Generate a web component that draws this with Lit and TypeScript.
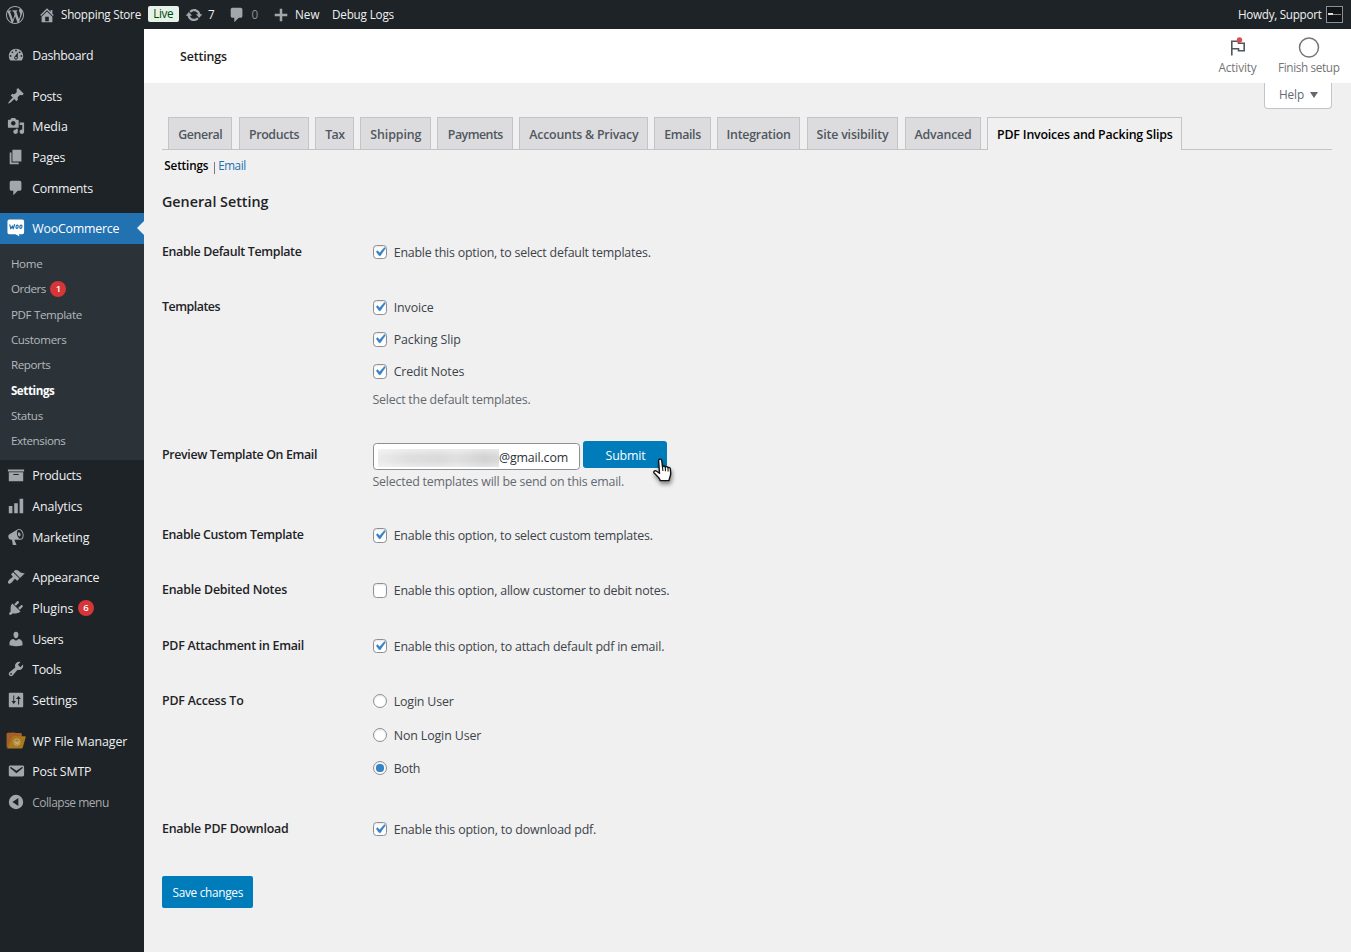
import { LitElement, html, css, svg, nothing } from "lit";
import { customElement, property } from "lit/decorators.js";
import { classMap } from "lit/directives/class-map.js";
import { styleMap } from "lit/directives/style-map.js";

const ICONS: Record<string, string> = {
  wordpress: "M20 10c0-5.51-4.49-10-10-10C4.48 0 0 4.49 0 10c0 5.52 4.48 10 10 10 5.51 0 10-4.48 10-10zM7.78 15.37L4.37 6.22c.55-.02 1.17-.08 1.17-.08.5-.06.44-1.13-.06-1.11 0 0-1.45.11-2.37.11-.18 0-.37 0-.58-.01C4.12 2.69 6.87 1.11 10 1.11c2.33 0 4.45.87 6.05 2.34-.68-.11-1.65.39-1.65 1.58 0 .74.45 1.36.9 2.1.35.61.55 1.36.55 2.46 0 1.49-1.4 5-1.4 5l-3.03-8.37c.54-.02.82-.17.82-.17.5-.05.44-1.25-.06-1.22 0 0-1.44.12-2.38.12-.87 0-2.33-.12-2.33-.12-.5-.03-.56 1.2-.06 1.22l.92.08 1.26 3.41zM17.41 10c.24-.64.74-1.87.43-4.25.7 1.29 1.05 2.71 1.05 4.25 0 3.29-1.73 6.24-4.4 7.78.97-2.59 1.94-5.2 2.92-7.78zM6.1 18.09C3.12 16.65 1.11 13.53 1.11 10c0-1.3.23-2.48.72-3.59C3.25 10.3 4.67 14.2 6.1 18.09zm4.03-6.63l2.58 6.98c-.86.29-1.76.45-2.71.45-.79 0-1.57-.11-2.29-.33.81-2.38 1.62-4.74 2.42-7.1z",
  home: "M16 8.5l1.53 1.53-1.06 1.06L10 4.6l-6.47 6.49-1.06-1.06L10 2.5l4 4v-2h2v4zm-6-2.46l6 5.99V18H4v-5.97zM12 17v-5H8v5h4z",
  update: "M10.2 3.28c3.53 0 6.43 2.61 6.92 6h2.08l-3.5 4-3.5-4h2.32c-.45-1.97-2.21-3.45-4.32-3.45-1.45 0-2.73.71-3.54 1.78L4.95 5.66C6.23 4.2 8.11 3.28 10.2 3.28zm-.4 13.44c-3.52 0-6.43-2.61-6.92-6H.8l3.5-4c1.17 1.33 2.33 2.67 3.5 4H5.48c.45 1.97 2.21 3.45 4.32 3.45 1.45 0 2.73-.71 3.54-1.78l1.71 1.95c-1.28 1.46-3.15 2.38-5.25 2.38z",
  plus: "M17 8.6v2.8h-5.6V17H8.6v-5.6H3V8.600h5.600V3h2.800v5.600z",
  dashboard: "M3.76 16h12.48c1.1-1.37 1.76-3.11 1.76-5 0-4.42-3.58-8-8-8s-8 3.58-8 8c0 1.89.66 3.63 1.76 5zM10 4c.55 0 1 .45 1 1s-.45 1-1 1-1-.45-1-1 .45-1 1-1zM6 6c.55 0 1 .45 1 1s-.45 1-1 1-1-.45-1-1 .45-1 1-1zm8 0c.55 0 1 .45 1 1s-.45 1-1 1-1-.45-1-1 .45-1 1-1zm-5.370 5.550L12 7v6c0 1.100-.9 2-2 2s-2-.9-2-2c0-.57.24-1.080.63-1.450zM4 10c.55 0 1 .45 1 1s-.45 1-1 1-1-.45-1-1 .45-1 1-1zm12 0c.55 0 1 .45 1 1s-.45 1-1 1-1-.45-1-1 .45-1 1-1zm-5 3c0-.55-.45-1-1-1s-1 .45-1 1 .45 1 1 1 1-.45 1-1z",
  post: "M10.44 3.02l1.82-1.82 6.36 6.35-1.83 1.82c-1.05-.68-2.48-.57-3.41.36l-.75.75c-.92.93-1.04 2.35-.35 3.41l-1.83 1.82-2.41-2.41-2.8 2.79c-.42.42-3.38 2.71-3.8 2.29s1.86-3.39 2.28-3.81l2.79-2.79L4.1 9.36l1.83-1.82c1.05.69 2.48.57 3.4-.36l.75-.75c.93-.92 1.05-2.35.36-3.41z",
  media: "M13 11V4c0-.55-.45-1-1-1h-1.67L9 1H5L3.67 3H2c-.55 0-1 .45-1 1v7c0 .55.45 1 1 1h10c.55 0 1-.45 1-1zM7 4.5c1.38 0 2.5 1.12 2.5 2.5S8.38 9.5 7 9.5 4.5 8.38 4.5 7 5.62 4.5 7 4.5zM14 6h5v10.5c0 1.38-1.12 2.5-2.5 2.5S14 17.88 14 16.5s1.12-2.5 2.5-2.5c.17 0 .34.02.5.05V9h-3V6zm-4 8.05V13h2v3.5c0 1.38-1.12 2.5-2.5 2.5S7 17.88 7 16.5 8.12 14 9.5 14c.17 0 .34.02.5.05z",
  page: "M6 15V2h10v13H6zm-1 1h8v2H3V5h2v11z",
  comment: "M5 2h9c1.1 0 2 .9 2 2v7c0 1.1-.9 2-2 2h-2l-5 5v-5H5c-1.1 0-2-.9-2-2V4c0-1.1.9-2 2-2z",
  archive: "M19 4v2H1V4h18zM2 7h16v10H2V7zm11 3V9H7v1h6z",
  chart: "M18 18V2h-4v16h4zm-6 0V7H8v11h4zm-6 0v-8H2v8h4z",
  megaphone: "M18.15 5.94c.46 1.62.38 3.22-.02 4.48-.42 1.28-1.26 2.18-2.3 2.48-.16.06-.26.06-.4.06-.06.02-.12.02-.18.02-.06.02-.14.02-.22.02h-6.8l2.22 5.5c.02.14-.06.26-.14.34-.08.1-.24.16-.34.16H6.95c-.1 0-.26-.06-.34-.16-.08-.08-.16-.2-.14-.34l-1-5.5H4.25l-.02-.02c-.5.06-1.08-.18-1.54-.62s-.88-1.08-1.06-1.88c-.24-.8-.2-1.56-.02-2.2.18-.62.58-1.08 1.06-1.3l.02-.02 9-5.4c.1-.06.18-.1.24-.16.06-.04.14-.08.24-.12.16-.08.28-.12.5-.18 1.04-.3 2.24.1 3.22.98s1.84 2.24 2.26 3.86zm-2.58 5.98h-.02c.4-.1.74-.34 1.04-.7.58-.7.86-1.76.86-3.04 0-.64-.1-1.3-.28-1.98-.34-1.36-1.02-2.5-1.78-3.24s-1.68-1.1-2.46-.88c-.82.22-1.4.96-1.7 2-.32 1.04-.28 2.36.06 3.72.38 1.36 1 2.5 1.8 3.24.78.74 1.62 1.1 2.48.88zm-2.54-7.08c.22-.04.42-.02.62.04.38.16.76.48 1.02 1s.42 1.2.42 1.78c0 .3-.04.56-.12.8-.18.48-.44.84-.86.94-.34.1-.8-.06-1.14-.4s-.64-.86-.78-1.5c-.18-.62-.12-1.24.02-1.72s.48-.84.82-.94z",
  appearance: "M14.48 11.06L7.41 3.99l1.5-1.5c.5-.56 2.3-.47 3.51.32 1.21.8 1.43 1.28 2.91 2.1 1.18.64 2.45 1.26 4.45.85zm-.71.71L6.7 4.7 4.93 6.47c-.39.39-.39 1.02 0 1.41l1.06 1.06c.39.39.39 1.03 0 1.42-.6.6-1.43 1.11-2.21 1.69-.35.26-.7.53-1.01.84C1.43 14.23.4 16.08 1.4 17.07c.99 1 2.84-.03 4.18-1.36.31-.31.58-.66.85-1.02.57-.78 1.08-1.61 1.69-2.21.39-.39 1.02-.39 1.41 0l1.06 1.06c.39.39 1.02.39 1.41 0z",
  plugins: "M13.11 4.36L9.87 7.6 8 5.73l3.24-3.24c.35-.34 1.05-.2 1.56.32.52.51.66 1.21.31 1.55zm-8 1.77l.91-1.12 9.01 9.01-1.19.84c-.71.71-2.63 1.16-3.82 1.16H6.14L4.9 17.26c-.59.59-1.54.59-2.12 0-.59-.58-.59-1.53 0-2.12l1.24-1.24v-3.88c0-1.13.4-3.19 1.09-3.89zm7.26 3.97l3.24-3.24c.34-.35 1.04-.21 1.55.31.52.51.66 1.21.31 1.55l-3.24 3.25z",
  users: "M10 9.25c-2.27 0-2.73-3.44-2.73-3.44C7 4.02 7.82 2 9.97 2c2.16 0 2.98 2.02 2.71 3.81 0 0-.41 3.44-2.68 3.44zm0 2.57L12.72 10c2.39 0 4.52 2.33 4.52 4.53v2.49s-3.65 1.13-7.24 1.13c-3.65 0-7.24-1.13-7.24-1.13v-2.49c0-2.25 1.94-4.48 4.47-4.48z",
  tools: "M16.68 9.77c-1.34 1.34-3.3 1.67-4.95.99l-5.41 6.52c-.99.99-2.59.99-3.58 0s-.99-2.59 0-3.57l6.52-5.42c-.68-1.65-.35-3.61.99-4.95 1.28-1.28 3.12-1.62 4.72-1.06l-2.89 2.89 2.82 2.82 2.86-2.87c.53 1.58.18 3.39-1.08 4.65zM3.81 16.21c.4.39 1.04.39 1.43 0 .4-.4.4-1.04 0-1.43-.39-.4-1.03-.4-1.43 0-.39.39-.39 1.03 0 1.43z",
  settings: "M18 16V4c0-1.1 0-2-1-2H3c-1 0-1 .9-1 2v12c0 1.1 0 2 1 2h14c1 0 1-.9 1-2zM8 11h2l-2.500 3.500L5 11h2V5h1zM12 9h-2l2.800-3.500L15.500 9h-2v6h-1.200V9z",
  email: "M3.87 4h13.250C18.370 4 19 4.590 19 5.790v8.420c0 1.190-.63 1.790-1.880 1.790H3.870c-1.250 0-1.880-.6-1.880-1.790V5.790c0-1.200.63-1.790 1.880-1.790zm6.620 8.600l6.740-5.530c.24-.2.43-.66.13-1.070-.29-.41-.82-.42-1.170-.17l-5.700 3.860L4.800 5.830c-.35-.25-.88-.24-1.170.17-.3.41-.11.87.13 1.070z",
  collapse: "M10 2a8 8 0 1 0 0 16a8 8 0 0 0 0-16zM12.600 5.600v8.800L6 10z",
};

/** Single-line text whose tracking is tuned so that it occupies a given advance width. */
@customElement("fit-text")
export class FitText extends LitElement {
  @property({ type: Number }) w = 0;
  @property() text = "";
  static styles = css`
    :host { display: inline-block; white-space: nowrap; }
    .t { display: inline-block; }
  `;
  render() {
    return html`<span class="t">${this.text}</span>`;
  }
  updated() {
    const t = this.renderRoot.querySelector(".t") as HTMLElement;
    t.style.letterSpacing = "0";
    const natural = t.getBoundingClientRect().width;
    if (this.w) t.style.letterSpacing = `${(this.w - natural) / this.text.length}px`;
  }
}

@customElement("dash-icon")
export class DashIcon extends LitElement {
  @property() name = "";
  static styles = css`
    :host { display: flex; width: 18px; height: 18px; }
    svg { width: 100%; height: 100%; fill: currentColor; overflow: visible; }
  `;
  render() {
    if (this.name === "woo")
      return html`<svg viewBox="0 0 20 20">
        <path fill="#fff" d="M2.500 .5h14.500q2 0 2 2v12.500q0 2-2 2h-4l1 2.500L9.500 17H2.500q-2 0-2-2V2.500q0-2 2-2z" />
        <g fill="none" stroke="#2271b1" stroke-width="1.300" stroke-linejoin="round" stroke-linecap="round">
          <path d="M3.200 6.500l1 4.400 1.800-3.200.9 3.200 1.500-4.800" />
          <ellipse cx="11.200" cy="8.600" rx="1.200" ry="1.900" transform="rotate(12 11.200 8.600)" />
          <ellipse cx="15.400" cy="8.600" rx="1.200" ry="1.900" transform="rotate(12 15.400 8.600)" />
        </g>
      </svg>`;
    if (this.name === "files")
      return html`<svg viewBox="0 0 20 20">
        <path fill="#a5602a" d="M-.5 2.500q0-1.500 1.500-1.800L8 .5q1.200 0 1.700 .6H15q1.500 0 1.500 1.500V17H-.5z" />
        <path fill="#a87a1d" d="M6 5.500Q6.500 4.700 7.500 4.700h12.500q1.200 0 .8 1.200L17.500 17.300q-.3 1-1.500 1H-.5L1 17z" />
        <circle cx="11" cy="11.300" r="3.500" fill="none" stroke="#cdb283" stroke-width=".9" />
        <path d="M8.800 9.800l1.400 3.800 .9-3 .9 3 1.400-3.800" fill="none" stroke="#cdb283" stroke-width="1" />
      </svg>`;
    return html`<svg viewBox="0 0 20 20">${svg`<path fill-rule="evenodd" d=${ICONS[this.name] ?? ""}></path>`}</svg>`;
  }
}

type Item = { icon: string; label: string; w: number; gap?: boolean; badge?: string; current?: boolean };

const MENU_TOP: Item[] = [
  { icon: "dashboard", label: "Dashboard", w: 61 },
  { icon: "post", label: "Posts", w: 29.5, gap: true },
  { icon: "media", label: "Media", w: 35.5 },
  { icon: "page", label: "Pages", w: 33 },
  { icon: "comment", label: "Comments", w: 60.5 },
  { icon: "woo", label: "WooCommerce", w: 87, gap: true, current: true },
];
const SUBMENU = [
  { label: "Home", w: 31.5 },
  { label: "Orders", w: 35, badge: "1" },
  { label: "PDF Template", w: 71 },
  { label: "Customers", w: 55.5 },
  { label: "Reports", w: 39.5 },
  { label: "Settings", w: 43.5, active: true },
  { label: "Status", w: 32 },
  { label: "Extensions", w: 54.5 },
];
const MENU_BOTTOM: Item[] = [
  { icon: "archive", label: "Products", w: 49 },
  { icon: "chart", label: "Analytics", w: 50 },
  { icon: "megaphone", label: "Marketing", w: 57 },
  { icon: "appearance", label: "Appearance", w: 67, gap: true },
  { icon: "plugins", label: "Plugins", w: 41, badge: "6" },
  { icon: "users", label: "Users", w: 31 },
  { icon: "tools", label: "Tools", w: 29 },
  { icon: "settings", label: "Settings", w: 45 },
  { icon: "files", label: "WP File Manager", w: 95, gap: true },
  { icon: "email", label: "Post SMTP", w: 59 },
];

@customElement("admin-menu")
export class AdminMenu extends LitElement {
  static styles = css`
    :host { display: flex; flex-direction: column; box-sizing: border-box; width: 144px; padding-top: 10.800px; background: #1d2327; color: #f0f0f1; font-size: 12.400px; }
    .item { display: flex; align-items: center; height: 30.700px; color: #f0f0f1; flex: none; }
    .item.gap { margin-top: 9.900px; }
    .item fit-text { margin-top: 1.700px; }
    .slot { display: flex; justify-content: center; width: 32.300px; color: #a2a7ad; }
    .slot.files dash-icon { margin-left: -1px; }
    .current { position: relative; background: #2271b1; color: #fff; }
    .current::after { content: ""; position: absolute; right: 0; top: 8.200px; border: 7.200px solid transparent; border-left: 0; border-right-color: #f0f0f1; }
    .badge { display: flex; align-items: center; justify-content: center; width: 16px; height: 16px; margin-left: 4.600px; border-radius: 50%; background: #d63638; color: #fff; font-size: 9.500px; font-weight: 600; }
    .sub { display: flex; flex-direction: column; padding: 7.450px 0 6.050px 10.900px; background: #2c3338; font-size: 11.600px; color: #b4b9be; }
    .sub > div { display: flex; align-items: center; height: 25.360px; }
    .sub .active { color: #fff; font-weight: 700; }
    .collapse { color: #a7aaad; font-size: 12px; }
  `;
  row(i: Item) {
    return html`<div class=${classMap({ item: true, gap: !!i.gap, current: !!i.current })}>
      <span class="slot ${i.icon}"><dash-icon name=${i.icon}></dash-icon></span>
      <fit-text .w=${i.w} .text=${i.label}></fit-text>
      ${i.badge ? html`<span class="badge">${i.badge}</span>` : nothing}
    </div>`;
  }
  render() {
    return html`${MENU_TOP.map((i) => this.row(i))}
      <div class="sub">
        ${SUBMENU.map((s) => html`<div class=${classMap({ active: !!s.active })}>
          <fit-text .w=${s.w} .text=${s.label}></fit-text>${s.badge ? html`<span class="badge">${s.badge}</span>` : nothing}
        </div>`)}
      </div>
      ${MENU_BOTTOM.map((i) => this.row(i))}
      <div class="item collapse">
        <span class="slot"><dash-icon name="collapse"></dash-icon></span>
        <fit-text .w=${76.5} .text=${"Collapse menu"}></fit-text>
      </div>`;
  }
}

@customElement("check-option")
export class CheckOption extends LitElement {
  @property() kind = "checkbox";
  @property({ type: Boolean }) on = false;
  @property() text = "";
  @property({ type: Number }) w = 0;
  static styles = css`
    :host { display: flex; align-items: center; height: 20px; color: #3c434a; }
    .box { display: flex; align-items: center; justify-content: center; box-sizing: border-box; width: 14.400px; height: 14.400px; margin: 0 6.500px 1.700px -0.200px; border: 1px solid #8c8f94; border-radius: 3.600px; background: #fff; box-shadow: inset 0 1px 2px rgba(0, 0, 0, 0.1); }
    .radio { border-radius: 50%; }
    .dot { width: 7.200px; height: 7.200px; border-radius: 50%; background: #3582c4; }
    svg { width: 18px; height: 18px; margin: -3px; flex: none; }
  `;
  render() {
    const radio = this.kind === "radio";
    return html`<span class=${classMap({ box: true, radio })}>
        ${!this.on ? nothing : radio ? html`<span class="dot"></span>`
          : html`<svg viewBox="0 0 20 20"><path fill="#3582c4" stroke="#3582c4" stroke-width=".4" d="M14.830 4.890l1.340.94-5.810 8.380H9.020L5.780 9.670l1.340-1.250 2.570 2.400z" /></svg>`}
      </span><fit-text .w=${this.w} .text=${this.text}></fit-text>`;
  }
}

const TABS = [
  { label: "General", t: 44, w: 64, gap: 0 },
  { label: "Products", t: 50, w: 70.5, gap: 6.5 },
  { label: "Tax", t: 19, w: 39, gap: 6 },
  { label: "Shipping", t: 51, w: 71, gap: 6 },
  { label: "Payments", t: 55, w: 76, gap: 6 },
  { label: "Accounts & Privacy", t: 109, w: 129, gap: 6 },
  { label: "Emails", t: 36.5, w: 56.5, gap: 6 },
  { label: "Integration", t: 64, w: 83.5, gap: 6 },
  { label: "Site visibility", t: 72, w: 91.500, gap: 6.5 },
  { label: "Advanced", t: 57, w: 76.5, gap: 6.5 },
  { label: "PDF Invoices and Packing Slips", t: 175.5, w: 195, gap: 6, active: true },
];

@customElement("app-root")
export class AppRoot extends LitElement {
  static styles = css`
    :host { display: flex; flex-direction: column; width: 100%; height: 952px; overflow: hidden; background: #f0f0f0; color: #1d2327; font: 12.400px/18px "Open Sans", "Noto Sans", sans-serif; font-stretch: 95%; }
    .bar { display: flex; align-items: center; height: 29px; box-sizing: border-box; padding: 0 8px 0 6.200px; background: #1d2327; color: #f0f0f1; font-size: 11.700px; flex: none; }
    .bar dash-icon { color: #a2a7ad; }
    .bar fit-text { margin-bottom: 1.200px; }
    .home { margin: 0 5px 0 13.800px; }
    .live { display: flex; justify-content: center; width: 31px; height: 16px; margin: -1px 6px 0 6.700px; border-radius: 2px; background: #e6f2e8; color: #00450c; line-height: 15px; }
    .upd { margin-right: 5.300px; }
    .com { margin: 0 5.500px 0 13.500px; }
    .zero { color: #8c8f94; }
    .new { margin: 0 5px 0 14px; }
    .debug { margin-left: 12.500px; }
    .howdy { margin-left: auto; }
    .avatar { display: flex; align-items: center; box-sizing: border-box; width: 17px; height: 17px; margin: 0 0 1px 4.500px; padding: 0 1px; border: 1px solid #8c8f94; background: #111416; }
    .avatar::before { content: ""; width: 5px; height: 2px; background: #ddd; }
    .avatar::after { content: ""; flex: 1; height: 1px; background: #888; }
    .body { display: flex; flex: 1; min-height: 0; }
    .page { display: flex; flex-direction: column; flex: 1; min-width: 0; }
    .head { display: flex; align-items: center; height: 54px; box-sizing: border-box; padding: 0 11.500px 0 36px; background: #fff; font-weight: 600; color: #1e1e1e; flex: none; }
    .head > fit-text { margin-top: 1.500px; }
    .acts { display: flex; gap: 21.500px; margin-left: auto; }
    .act { display: flex; flex-direction: column; align-items: center; font-weight: 400; font-size: 11.800px; color: #757575; }
    .act svg { width: 24px; height: 22px; }
    .act fit-text { margin-bottom: 1px; }
    .main { display: flex; flex-direction: column; align-items: flex-start; padding: 0 19px 0 18px; }
    .help { display: flex; align-items: center; justify-content: center; gap: 5.500px; align-self: flex-end; box-sizing: border-box; width: 68px; height: 26px; padding: 0 0 3px 0.500px; border: 1px solid #c3c4c7; border-top: 0; border-radius: 0 0 4px 4px; background: #fff; color: #646970; font-size: 11.800px; }
    .help i { border: 4px solid transparent; border-top: 6px solid #646970; border-bottom: 0; margin-top: 1px; }
    .tabs { display: flex; align-self: stretch; box-sizing: border-box; height: 41px; padding: 8px 0 0 6px; border-bottom: 1px solid #c3c4c7; font-weight: 600; color: #50575e; }
    .tab { display: flex; align-items: center; justify-content: center; box-sizing: border-box; height: 32px; padding: 2px 0 0 0.600px; border: 1px solid #c3c4c7; border-bottom: 0; background: #dcdcde; flex: none; }
    .tab.active { height: 33px; background: #f0f0f0; color: #000; }
    .links { display: flex; height: 18px; margin: 6px 0 0 2.300px; font-size: 11.700px; color: #646970; }
    .links b { font-weight: 600; color: #000; margin-right: 5.400px; }
    .links i { width: 1px; height: 12px; margin: 6px 3.500px 0 0; background: #787c82; }
    .links a { color: #2271b1; }
    h2 { margin: 18px 0 0; font-size: 14.300px; line-height: 20px; font-weight: 600; }
    .form { display: grid; grid-template-columns: 211px auto; margin-top: 31px; }
    .form > div { display: flex; flex-direction: column; align-items: flex-start; }
    .th { font-weight: 600; }
    .r1 { height: 55.300px; }
    .r4, .r5, .r6 { height: 55.200px; }
    .r2 { height: 148px; }
    .r3 { height: 80px; }
    .r7 { height: 127.800px; }
    .r8 { height: 35px; }
    .r2 .opt + .opt { margin-top: 12px; }
    .r7 .opt + .opt { margin-top: 14px; }
    .r7 .opt:last-child { margin-top: 13px; }
    .desc { margin-left: -0.500px; color: #646970; }
    .r2 .desc { margin-top: 9px; }
    .mail { display: flex; align-items: flex-start; margin-top: -5px; }
    .input { display: flex; align-items: center; box-sizing: border-box; width: 207px; height: 27px; margin: 2px 3px 0 0; padding: 2px 0 0 4px; border: 1px solid #8c8f94; border-radius: 3.600px; background: #fff; color: #2c3338; }
    .smear { width: 121px; height: 18px; background: linear-gradient(180deg, rgba(255, 255, 255, 0.45), rgba(255, 255, 255, 0) 40%, rgba(255, 255, 255, 0) 65%, rgba(255, 255, 255, 0.35)), linear-gradient(90deg, #ebebeb, #dfdfdf 25%, #dadada 50%, #e0e0e0 65%, #d3d3d3 88%, #d9d9d9); }
    .submit { position: relative; display: flex; align-items: center; justify-content: center; box-sizing: border-box; width: 84px; height: 27px; padding: 1.500px 0 0 1px; border-radius: 3px; background: #007cba; color: #fff; }
    .hand { position: absolute; left: 68px; top: 16px; width: 24px; height: 30px; filter: drop-shadow(1px 3px 2px rgba(0, 0, 0, 0.45)); }
    .r3 .desc { margin-top: 3px; }
    .save { display: flex; align-items: center; justify-content: center; box-sizing: border-box; width: 91px; height: 32px; margin-top: 21px; padding: 1.500px 0 0 0.500px; border-radius: 2px; background: #007cba; color: #fff; font-size: 11.800px; }
  `;
  th(text: string, w: number, row: string) {
    return html`<div class="th ${row}"><fit-text .w=${w} .text=${text}></fit-text></div>`;
  }
  opt(text: string, w: number, on = true, kind = "checkbox") {
    return html`<check-option class="opt" .kind=${kind} .on=${on} .text=${text} .w=${w}></check-option>`;
  }
  t(text: string, w: number) {
    return html`<fit-text .w=${w} .text=${text}></fit-text>`;
  }
  render() {
    return html`
      <div class="bar">
        <dash-icon name="wordpress"></dash-icon>
        <dash-icon class="home" name="home"></dash-icon>${this.t("Shopping Store", 80)}
        <span class="live">${this.t("Live", 20)}</span>
        <dash-icon class="upd" name="update"></dash-icon>${this.t("7", 6.5)}
        <dash-icon class="com" name="comment"></dash-icon><span class="zero">${this.t("0", 6.5)}</span>
        <dash-icon class="new" name="plus"></dash-icon>${this.t("New", 24.5)}
        <span class="debug">${this.t("Debug Logs", 62)}</span>
        <span class="howdy">${this.t("Howdy, Support", 83.500)}</span>
        <span class="avatar"></span>
      </div>
      <div class="body">
        <admin-menu></admin-menu>
        <div class="page">
          <div class="head">
            ${this.t("Settings", 47)}
            <div class="acts">
              <div class="act">
                <svg viewBox="0 0 24 22" fill="none" stroke="#50575e" stroke-width="1.600">
                  <path d="M5.800 19.500V5.200h6.700v2h5.700v7.600h-5.700v-2H5.800" /><circle cx="13.500" cy="4" r="2.700" fill="#d94f4f" stroke="none" />
                </svg>
                ${this.t("Activity", 38)}
              </div>
              <div class="act">
                <svg viewBox="0 0 24 22" fill="none" stroke="#757575" stroke-width="1.500"><circle cx="12" cy="11.500" r="9.500" /></svg>
                ${this.t("Finish setup", 61.500)}
              </div>
            </div>
          </div>
          <div class="main">
            <div class="help">${this.t("Help", 25)}<i></i></div>
            <div class="tabs">
              ${TABS.map((tab) => html`<div class=${classMap({ tab: true, active: !!tab.active })}
                style=${styleMap({ width: `${tab.w}px`, marginLeft: `${tab.gap}px` })}>${this.t(tab.label, tab.t)}</div>`)}
            </div>
            <div class="links"><b>${this.t("Settings", 44)}</b><i></i><a>${this.t("Email", 27.500)}</a></div>
            <h2>${this.t("General Setting", 106.500)}</h2>
            <div class="form">
              ${this.th("Enable Default Template", 139.500, "r1")}
              <div class="r1">${this.opt("Enable this option, to select default templates.", 257)}</div>
              ${this.th("Templates", 58, "r2")}
              <div class="r2">
                ${this.opt("Invoice", 40)}${this.opt("Packing Slip", 67)}${this.opt("Credit Notes", 70.500)}
                <span class="desc">${this.t("Select the default templates.", 158)}</span>
              </div>
              ${this.th("Preview Template On Email", 155, "r3")}
              <div class="r3">
                <div class="mail">
                  <div class="input"><span class="smear"></span>${this.t("@gmail.com", 69)}</div>
                  <div class="submit">${this.t("Submit", 40)}
                    <svg class="hand" viewBox="0 0 24 30">
                      <path fill="#fff" stroke="#111" stroke-width="1.400" stroke-linejoin="round" d="M7.600 3.800c0-2.200 3-2.200 3.200 0l.7 6.200c.4-1.400 2.600-1.200 2.800.3.600-1.100 2.500-.8 2.700.6.800-.8 2.300-.3 2.400 1.100l.3 4.600c0 2.800-1.400 4-1.700 7H9.200c-.6-2.700-3.800-5.200-5.900-7.300-1.300-1.500.3-3.300 2-2.300l3.200 2.300z" />
                      <path fill="none" stroke="#111" stroke-width="1.100" d="M11.500 10l.4 4M14.300 10.500l.2 3.700M17 11.200l.1 3.200" />
                    </svg>
                  </div>
                </div>
                <span class="desc">${this.t("Selected templates will be send on this email.", 251.500)}</span>
              </div>
              ${this.th("Enable Custom Template", 141.500, "r4")}
              <div class="r4">${this.opt("Enable this option, to select custom templates.", 259)}</div>
              ${this.th("Enable Debited Notes", 125, "r5")}
              <div class="r5">${this.opt("Enable this option, allow customer to debit notes.", 275.500, false)}</div>
              ${this.th("PDF Attachment in Email", 142, "r6")}
              <div class="r6">${this.opt("Enable this option, to attach default pdf in email.", 270.500)}</div>
              ${this.th("PDF Access To", 81.500, "r7")}
              <div class="r7">
                ${this.opt("Login User", 60, false, "radio")}${this.opt("Non Login User", 87.500, false, "radio")}${this.opt("Both", 26.500, true, "radio")}
              </div>
              ${this.th("Enable PDF Download", 126.500, "r8")}
              <div class="r8">${this.opt("Enable this option, to download pdf.", 202.500)}</div>
            </div>
            <div class="save">${this.t("Save changes", 70.500)}</div>
          </div>
        </div>
      </div>
    `;
  }
}
